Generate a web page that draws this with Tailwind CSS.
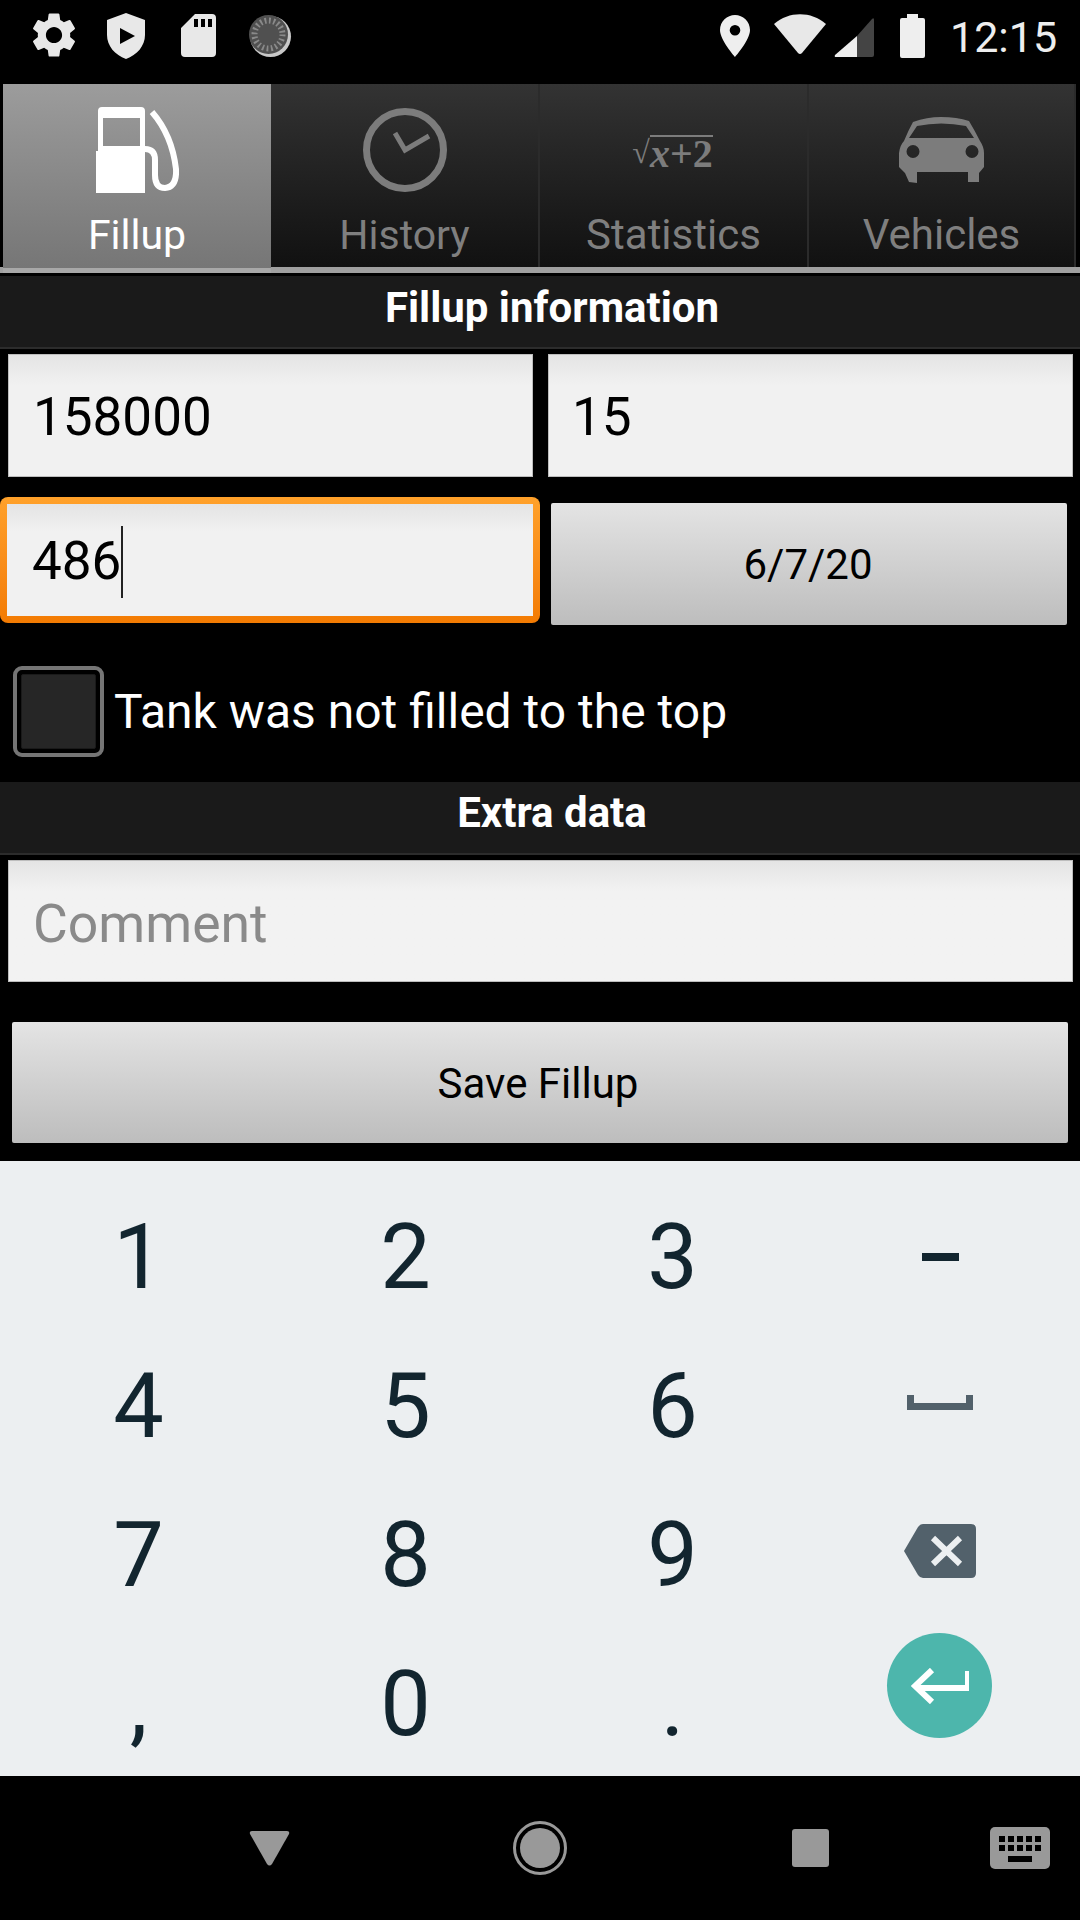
<!DOCTYPE html>
<html lang="en">
<head>
    <meta charset="UTF-8">
    <script src="https://cdn.jsdelivr.net/npm/@tailwindcss/browser@4"></script>
    <title>Fillup</title>
</head>

<body class="bg-black">
    <main class="w-[1080px] h-[1920px] flex flex-col overflow-hidden bg-black font-['Roboto',sans-serif]">

        <!-- status bar -->
        <div class="h-[84px] shrink-0 flex items-center text-[#eeeeee]">
            <svg class="ml-[27px] w-[54px] h-[54px] mt-[-14px] text-[#e8e8e8]" viewBox="0 0 24 24" fill="currentColor"><path d="M19.14 12.94c.04-.3.06-.61.06-.94 0-.32-.02-.64-.07-.94l2.03-1.58c.18-.14.23-.41.12-.61l-1.92-3.32c-.12-.22-.37-.29-.59-.22l-2.39.96c-.5-.38-1.03-.7-1.62-.94l-.36-2.54c-.04-.24-.24-.41-.48-.41h-3.84c-.24 0-.43.17-.47.41l-.36 2.54c-.59.24-1.13.57-1.62.94l-2.39-.96c-.22-.08-.47 0-.59.22L2.74 8.87c-.12.21-.08.47.12.61l2.03 1.58c-.05.3-.09.63-.09.94s.02.64.07.94l-2.03 1.58c-.18.14-.23.41-.12.61l1.92 3.32c.12.22.37.29.59.22l2.39-.96c.5.38 1.03.7 1.62.94l.36 2.54c.05.24.24.41.48.41h3.84c.24 0 .44-.17.47-.41l.36-2.54c.59-.24 1.13-.56 1.62-.94l2.39.96c.22.08.47 0 .59-.22l1.92-3.32c.12-.22.07-.47-.12-.61l-2.01-1.58zM12 15.6c-1.98 0-3.6-1.62-3.6-3.6s1.62-3.6 3.6-3.6 3.6 1.62 3.6 3.6-1.62 3.6-3.6 3.6z"/></svg>
            <svg class="ml-[26px] w-[38px] h-[46px] mt-[-12px]" viewBox="0 0 38 46"><path fill="#e8e8e8" fill-rule="evenodd" d="M19 0 L38 7 V22 C38 33 30 42 19 46 C8 42 0 33 0 22 V7 Z M13 15 V31 L28 23 Z"/></svg>
            <svg class="ml-[36px] w-[35px] h-[43px] mt-[-13px]" viewBox="0 0 35 43"><path fill="#e8e8e8" fill-rule="evenodd" d="M14 0 H31 Q35 0 35 4 V39 Q35 43 31 43 H4 Q0 43 0 39 V14 Z M13 5 V13 H17 V5 Z M20 5 V13 H24 V5 Z M27 5 V13 H31 V5 Z"/></svg>
            <svg class="ml-[33px] w-[43px] h-[44px] mt-[-13px]" viewBox="0 0 43 44">
                <circle cx="21.500" cy="22.500" r="20.500" fill="#c8c8c8"/>
                <circle cx="19.500" cy="20.500" r="19.500" fill="#505050"/>
                <circle cx="19.500" cy="20.500" r="14" fill="none" stroke="#8a8a8a" stroke-width="6" stroke-dasharray="1.800 2.600"/>
            </svg>

            <svg class="ml-[428px] w-[30px] h-[42px] mt-[-13px]" viewBox="0 0 30 42"><path fill="#eeeeee" fill-rule="evenodd" d="M15 0 C7 0 0 6.500 0 15 C0 25 15 42 15 42 C15 42 30 25 30 15 C30 6.500 23 0 15 0 Z M15 10 A5.300 5.300 0 1 1 15 20.600 A5.300 5.300 0 1 1 15 10 Z"/></svg>
            <svg class="ml-[24px] w-[52px] h-[41px] mt-[-15px]" viewBox="0 0 52 41"><path fill="#e8e8e8" d="M0 10 C15 -3 37 -3 52 10 L28 39 Q26 41 24 39 Z"/></svg>
            <svg class="ml-[8px] w-[40px] h-[40px] mt-[-10px]" viewBox="0 0 40 40">
                <path fill="#444444" d="M23 40 V19 L38 2 Q40 0 40 3 V38 Q40 40 38 40 Z"/>
                <path fill="#eeeeee" d="M23 19 V40 H2 Q0 40 1 38 Z"/>
            </svg>
            <svg class="ml-[26px] w-[25px] h-[44px] mt-[-12px]" viewBox="0 0 25 44"><path fill="#eeeeee" d="M7 0 H18 V4 H23 Q25 4 25 6 V42 Q25 44 23 44 H2 Q0 44 0 42 V6 Q0 4 2 4 H7 Z"/></svg>
            <span class="ml-[25px] text-[43px] leading-none mt-[-10px] text-[#eeeeee]">12:15</span>
        </div>

        <!-- tabs -->
        <div class="relative h-[189px] shrink-0 flex pl-[3px] pr-[4px]">
            <div class="absolute left-0 right-0 bottom-0 h-[6px] bg-[#a0a0a0]"></div>

            <div class="relative w-[268px] h-[189px] flex flex-col items-center bg-linear-to-b from-[#9c9c9c] to-[#767676] border-b-[5px] border-[#a8a8a8]">
                <svg class="mt-[23px] w-[83px] h-[86px] ml-[1px]" viewBox="0 0 83 86">
                    <path fill="#ffffff" fill-rule="evenodd" d="M6 0 H45 Q49 0 49 4 V86 H0 V44 H2 V4 Q2 0 6 0 Z M7 11 V39 H44 V11 Z"/>
                    <path fill="none" stroke="#ffffff" stroke-width="6" d="M56 5 Q76 28 80 62 Q81 80 69 81 Q59 81 59 68 L59 53 Q59 42 49 42"/>
                </svg>
                <span class="mt-[18px] text-[41px] leading-[48px] text-white">Fillup</span>
            </div>

            <div class="relative w-[269px] h-[183px] flex flex-col items-center bg-linear-to-b from-[#333333] to-[#111111] border-r-2 border-[#2b2b2b]">
                <svg class="mt-[23px] w-[86px] h-[86px]" viewBox="0 0 86 86" fill="none" stroke="#7c7c7c">
                    <circle cx="43" cy="43" r="38.500" stroke-width="7"/>
                    <path stroke-width="5" d="M33 26 L43 43 L67 29"/>
                </svg>
                <span class="mt-[18px] text-[41px] leading-[48px] text-[#7f7f7f]">History</span>
            </div>

            <div class="relative w-[269px] h-[183px] flex flex-col items-center bg-linear-to-b from-[#333333] to-[#111111] border-r-2 border-[#2b2b2b]">
                <div class="mt-[51px] h-[58px] flex items-start font-['Liberation_Serif',serif] font-bold text-[#7c7c7c] text-[40px] leading-[34px] ml-[-2px]">
                    <span class="font-normal text-[32px]">√</span><span class="border-t-2 border-[#7c7c7c]"><i>x</i>+2</span>
                </div>
                <span class="mt-[18px] text-[42px] leading-[48px] text-[#7f7f7f]">Statistics</span>
            </div>

            <div class="relative w-[267px] h-[183px] flex flex-col items-center bg-linear-to-b from-[#333333] to-[#111111] border-r-2 border-[#2b2b2b]">
                <svg class="mt-[33px] w-[85px] h-[76px]" viewBox="0 0 85 76">
                    <path fill="#7c7c7c" fill-rule="evenodd" d="M42 0 Q58 0 70 4 Q76 14 81 24 Q85 30 85 36 V50 L80 56 V65 H69 V55 H18 V66 L10 65 L6 56 L0 50 V36 Q1 28 5 24 Q9 14 14 5 Q28 0 42 0 Z M18 9 L10 21 H75 L67 9 Q42 4 18 9 Z M14 28 A6.500 6.500 0 1 0 14 41 A6.500 6.500 0 1 0 14 28 Z M73 28 A6.500 6.500 0 1 0 73 41 A6.500 6.500 0 1 0 73 28 Z"/>
                </svg>
                <span class="mt-[18px] text-[42px] leading-[48px] text-[#7f7f7f]">Vehicles</span>
            </div>
        </div>

        <!-- fillup form -->
        <div class="mt-[3px] h-[73px] shrink-0 flex items-center justify-center pl-[24px] pb-[8px] bg-[#1a1a1a] border-b-2 border-[#2c2c2c] text-white font-bold text-[42px]">Fillup information</div>

        <div class="mt-[5px] flex pl-[8px]">
            <div class="w-[525px] h-[123px] flex items-center pl-[24px] pt-[4px] text-[53px] text-black bg-linear-to-b from-[#e4e4e4] from-0% to-[#f1f1f1] to-25% border border-[#bdbdbd]">158000</div>
            <div class="ml-[15px] w-[525px] h-[123px] flex items-center pl-[23px] pt-[4px] text-[53px] text-black bg-linear-to-b from-[#e4e4e4] from-0% to-[#f1f1f1] to-25% border border-[#bdbdbd]">15</div>
        </div>

        <div class="mt-[20px] flex items-start">
            <div class="w-[540px] h-[126px] rounded-[8px] p-[7px] bg-linear-to-b from-[#ffa12a] to-[#f37b02]">
                <div class="h-full flex items-center pl-[25px] pt-[4px] text-[53px] text-black bg-linear-to-b from-[#e4e4e4] from-0% to-[#f1f1f1] to-25%">486<span class="w-[2px] h-[72px] bg-[#222222]"></span></div>
            </div>
            <div class="ml-[11px] mt-[6px] w-[516px] h-[122px] flex items-center justify-center pr-[2px] text-[42px] text-black rounded-[2px] bg-linear-to-b from-[#e4e4e4] to-[#bdbdbd]">6/7/20</div>
        </div>

        <div class="mt-[41px] flex items-center pl-[13px]">
            <div class="w-[91px] h-[91px] rounded-[9px] border-[4px] border-[#757575] p-[4px] bg-black">
                <div class="w-full h-full rounded-[2px] bg-[#262626] border border-[#1a1a1a]"></div>
            </div>
            <span class="ml-[10px] text-[48px] text-white">Tank was not filled to the top</span>
        </div>

        <!-- extra data -->
        <div class="mt-[25px] h-[73px] shrink-0 flex items-center justify-center pl-[24px] pb-[10px] bg-[#1a1a1a] border-b-2 border-[#2c2c2c] text-white font-bold text-[42px]">Extra data</div>

        <div class="mt-[5px] ml-[8px] w-[1065px] h-[122px] flex items-center pl-[24px] pt-[6px] text-[53.5px] text-[#8a8a8a] bg-linear-to-b from-[#e4e4e4] from-0% to-[#f2f2f2] to-25% border border-[#bdbdbd]">Comment</div>

        <div class="mt-[40px] ml-[12px] w-[1056px] h-[121px] flex items-center justify-center pr-[4px] pt-[2px] text-[42px] text-black rounded-[2px] bg-linear-to-b from-[#e4e4e4] to-[#bdbdbd]">Save Fillup</div>

        <!-- number keyboard -->
        <div class="mt-[18px] h-[615px] shrink-0 bg-[#eceff1] pt-[20px] pl-[5px] pr-[7px] grid grid-cols-4 grid-rows-4 text-[90px] leading-none text-[#12252f]">
            <div class="flex items-center justify-center pt-[6px]">1</div>
            <div class="flex items-center justify-center pt-[6px]">2</div>
            <div class="flex items-center justify-center pt-[6px]">3</div>
            <div class="flex items-center justify-center pl-[2px] pt-[4px]">
                <div class="w-[37px] h-[8px] bg-[#12252f]"></div>
            </div>

            <div class="flex items-center justify-center pt-[6px]">4</div>
            <div class="flex items-center justify-center pt-[6px]">5</div>
            <div class="flex items-center justify-center pt-[6px]">6</div>
            <div class="flex items-center justify-center pb-[3px]">
                <svg class="w-[66px] h-[15px]" viewBox="0 0 66 15"><path fill="#52616b" d="M0 0 H7 V8 H59 V0 H66 V15 H0 Z"/></svg>
            </div>

            <div class="flex items-center justify-center pt-[6px]">7</div>
            <div class="flex items-center justify-center pt-[6px]">8</div>
            <div class="flex items-center justify-center pt-[6px]">9</div>
            <div class="flex items-center justify-center pb-[4px]">
                <svg class="w-[72px] h-[54px]" viewBox="0 0 72 54">
                    <path fill="#52616b" d="M19 0 H67 Q72 0 72 5 V49 Q72 54 67 54 H19 Q16 54 14 51 L0 27 L14 3 Q16 0 19 0 Z"/>
                    <path stroke="#eceff1" stroke-width="6" d="M29 14 L56 40 M56 14 L29 40"/>
                </svg>
            </div>

            <div class="flex items-center justify-center pt-[6px]">,</div>
            <div class="flex items-center justify-center pt-[6px]">0</div>
            <div class="flex items-center justify-center pt-[6px]">.</div>
            <div class="flex justify-center pt-[6px]">
                <div class="w-[105px] h-[105px] rounded-full bg-[#4db6ac] flex items-center justify-center">
                    <svg class="w-[58px] h-[36px]" viewBox="0 0 58 36" fill="none" stroke="#ffffff" stroke-width="6"><path d="M57 3 V20 H5 M21 2 L4 18 L21 34"/></svg>
                </div>
            </div>
        </div>

        <!-- nav bar -->
        <div class="flex-1 flex items-center relative">
            <svg class="ml-[249px] w-[41px] h-[35px]" viewBox="0 0 41 35"><path fill="#999999" d="M3 0 H38 Q41 0 40 3 L23 33 Q20.500 36 18 33 L1 3 Q0 0 3 0 Z"/></svg>
            <svg class="ml-[223px] w-[54px] h-[54px]" viewBox="0 0 54 54">
                <circle cx="27" cy="27" r="25.500" fill="none" stroke="#999999" stroke-width="3"/>
                <circle cx="27" cy="27" r="20" fill="#999999"/>
            </svg>
            <div class="ml-[225px] w-[37px] h-[38px] rounded-[3px] bg-[#999999]"></div>
            <svg class="ml-[161px] w-[60px] h-[42px]" viewBox="0 0 60 42">
                <rect width="60" height="42" rx="5" fill="#999999"/>
                <path fill="#000000" d="M9 9 h6 v6 h-6 z M18 9 h6 v6 h-6 z M27 9 h6 v6 h-6 z M36 9 h6 v6 h-6 z M45 9 h6 v6 h-6 z M9 18 h6 v6 h-6 z M18 18 h6 v6 h-6 z M27 18 h6 v6 h-6 z M36 18 h6 v6 h-6 z M45 18 h6 v6 h-6 z M18 29 h24 v6 h-24 z"/>
            </svg>
        </div>

    </main>
</body>
</html>
